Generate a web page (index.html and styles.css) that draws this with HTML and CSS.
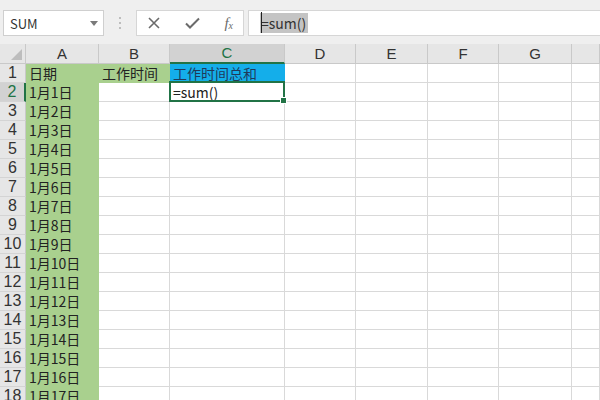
FILE: index.html
```html
<html>
    <head>
        <title>工作时间</title>
        <link rel="stylesheet" href="styles.css">
    </head>
    <body>
        <div class="toolbar">
            <div class="namebox">
                <span>SUM</span>
                <svg class="caret" width="8" height="5" viewBox="0 0 8 5"><path d="M0 0h8L4 5z" fill="#7a7a7a"/></svg>
            </div>
            <div class="dots"><i></i><i></i><i></i></div>
            <div class="btns">
                <svg width="12" height="12" viewBox="0 0 12 12"><path d="M1 1l10 10M11 1L1 11" stroke="#6b6b6b" stroke-width="1.6"/></svg>
                <svg width="15" height="12" viewBox="0 0 15 12"><path d="M1 6.5l4 4L14 1.5" stroke="#6b6b6b" stroke-width="2" fill="none"/></svg>
                <span class="fx">f<sub>x</sub></span>
            </div>
            <div class="formula"><span class="sel"><b class="cursor"></b>=sum()</span></div>
        </div>

        <div class="sheet">
            <div class="hd corner"></div><div class="hd">A</div><div class="hd">B</div><div class="hd on">C</div><div class="hd">D</div><div class="hd">E</div><div class="hd">F</div><div class="hd">G</div><div class="hd"></div>

            <div class="rh">1</div><div class="c g">日期</div><div class="c g">工作时间</div><div class="c b">工作时间总和</div><div class="c"></div><div class="c"></div><div class="c"></div><div class="c"></div><div class="c"></div>
            <div class="rh on">2</div><div class="c g">1月1日</div><div class="c"></div><div class="c act">=sum()</div><div class="c"></div><div class="c"></div><div class="c"></div><div class="c"></div><div class="c"></div>
            <div class="rh">3</div><div class="c g">1月2日</div><div class="c"></div><div class="c"></div><div class="c"></div><div class="c"></div><div class="c"></div><div class="c"></div><div class="c"></div>
            <div class="rh">4</div><div class="c g">1月3日</div><div class="c"></div><div class="c"></div><div class="c"></div><div class="c"></div><div class="c"></div><div class="c"></div><div class="c"></div>
            <div class="rh">5</div><div class="c g">1月4日</div><div class="c"></div><div class="c"></div><div class="c"></div><div class="c"></div><div class="c"></div><div class="c"></div><div class="c"></div>
            <div class="rh">6</div><div class="c g">1月5日</div><div class="c"></div><div class="c"></div><div class="c"></div><div class="c"></div><div class="c"></div><div class="c"></div><div class="c"></div>
            <div class="rh">7</div><div class="c g">1月6日</div><div class="c"></div><div class="c"></div><div class="c"></div><div class="c"></div><div class="c"></div><div class="c"></div><div class="c"></div>
            <div class="rh">8</div><div class="c g">1月7日</div><div class="c"></div><div class="c"></div><div class="c"></div><div class="c"></div><div class="c"></div><div class="c"></div><div class="c"></div>
            <div class="rh">9</div><div class="c g">1月8日</div><div class="c"></div><div class="c"></div><div class="c"></div><div class="c"></div><div class="c"></div><div class="c"></div><div class="c"></div>
            <div class="rh">10</div><div class="c g">1月9日</div><div class="c"></div><div class="c"></div><div class="c"></div><div class="c"></div><div class="c"></div><div class="c"></div><div class="c"></div>
            <div class="rh">11</div><div class="c g">1月10日</div><div class="c"></div><div class="c"></div><div class="c"></div><div class="c"></div><div class="c"></div><div class="c"></div><div class="c"></div>
            <div class="rh">12</div><div class="c g">1月11日</div><div class="c"></div><div class="c"></div><div class="c"></div><div class="c"></div><div class="c"></div><div class="c"></div><div class="c"></div>
            <div class="rh">13</div><div class="c g">1月12日</div><div class="c"></div><div class="c"></div><div class="c"></div><div class="c"></div><div class="c"></div><div class="c"></div><div class="c"></div>
            <div class="rh">14</div><div class="c g">1月13日</div><div class="c"></div><div class="c"></div><div class="c"></div><div class="c"></div><div class="c"></div><div class="c"></div><div class="c"></div>
            <div class="rh">15</div><div class="c g">1月14日</div><div class="c"></div><div class="c"></div><div class="c"></div><div class="c"></div><div class="c"></div><div class="c"></div><div class="c"></div>
            <div class="rh">16</div><div class="c g">1月15日</div><div class="c"></div><div class="c"></div><div class="c"></div><div class="c"></div><div class="c"></div><div class="c"></div><div class="c"></div>
            <div class="rh">17</div><div class="c g">1月16日</div><div class="c"></div><div class="c"></div><div class="c"></div><div class="c"></div><div class="c"></div><div class="c"></div><div class="c"></div>
            <div class="rh">18</div><div class="c g">1月17日</div><div class="c"></div><div class="c"></div><div class="c"></div><div class="c"></div><div class="c"></div><div class="c"></div><div class="c"></div>
        </div>
    </body>
</html>
```
FILE: styles.css
```css
body{
	margin:0;
	width:600px;
	height:400px;
	overflow:hidden;
	background:#fff;
	font-family:'Noto Sans CJK SC', sans-serif;
	}
.toolbar{
	height:44px;
	box-sizing:border-box;
	padding-top:10px;
	background:#efefef;
	display:flex;
	align-items:flex-start;
	}
.namebox{
	margin-left:3px;
	width:101px;
	height:26px;
	box-sizing:border-box;
	background:#fff;
	border:1px solid #cfcfcf;
	display:flex;
	align-items:center;
	justify-content:space-between;
	padding:0 5px 0 6px;
	font-size:13px;
	color:#333;
	}
.dots{
	width:32px;
	height:26px;
	display:flex;
	flex-direction:column;
	align-items:center;
	justify-content:center;
	gap:3px;
	}
.dots i{
	width:2px;
	height:2px;
	background:#bdbdbd;
	}
.btns{
	width:108px;
	height:26px;
	box-sizing:border-box;
	background:#fff;
	border:1px solid #d6d6d6;
	display:flex;
	align-items:center;
	justify-content:space-between;
	padding:0 10px 0 11px;
	}
.fx{
	font-family:'Liberation Serif', serif;
	font-style:italic;
	font-size:15px;
	color:#6b6b6b;
	}
.fx sub{
	font-size:10px;
	vertical-align:-1px;
	}
.formula{
	margin-left:4px;
	flex:1;
	height:26px;
	box-sizing:border-box;
	background:#fff;
	border:1px solid #d6d6d6;
	border-right:0;
	display:flex;
	align-items:center;
	padding-left:11px;
	font-size:14px;
	color:#333;
	}
.sel{
	position:relative;
	background:#c4c4c4;
	padding:1px 2px 1px 1px;
	line-height:18px;
	}
.cursor{
	position:absolute;
	left:1px;
	top:-1px;
	width:1px;
	height:21px;
	background:#222;
	}
.sheet{
	display:grid;
	grid-template-columns:26px 73px 71px 115px 71px 72px 71px 73px 1fr;
	grid-template-rows:20px;
	grid-auto-rows:19px;
	}
.hd{
	background:#e6e6e6;
	border-right:1px solid #c9c9c9;
	border-bottom:1px solid #c9c9c9;
	font-family:'Liberation Sans', sans-serif;
	font-size:15px;
	color:#333;
	display:flex;
	align-items:flex-end;
	justify-content:center;
	line-height:18px;
	}
.hd.on{
	background:#d2d2d2;
	border-bottom:2px solid #217346;
	color:#217346;
	}
.corner{
	position:relative;
	}
.corner::after{
	content:'';
	position:absolute;
	right:3px;
	bottom:3px;
	border-left:11px solid transparent;
	border-bottom:11px solid #bdbdbd;
	}
.rh{
	background:#e6e6e6;
	border-right:1px solid #c9c9c9;
	border-bottom:1px solid #d4d4d4;
	font-family:'Liberation Sans', sans-serif;
	font-size:16px;
	color:#333;
	display:flex;
	align-items:flex-end;
	justify-content:center;
	line-height:18px;
	}
.rh.on{
	background:#d2d2d2;
	border-right:2px solid #217346;
	color:#217346;
	}
.c{
	border-right:1px solid #d9d9d9;
	border-bottom:1px solid #d9d9d9;
	padding-left:3px;
	font-size:14px;
	line-height:18px;
	color:#222;
	white-space:nowrap;
	display:flex;
	align-items:flex-end;
	}
.c.g{
	background:#a9d08e;
	border-color:#a9d08e;
	}
.c.b{
	background:#14aeea;
	border-color:#14aeea;
	color:#1f3a5a;
	}
.c.act{
	position:relative;
	}
.c.act::before{
	content:'';
	position:absolute;
	left:-1px;
	top:-2px;
	right:-1px;
	bottom:-1px;
	border:2px solid #217346;
	}
.c.act::after{
	content:'';
	position:absolute;
	right:-3px;
	bottom:-3px;
	width:5px;
	height:5px;
	background:#217346;
	border:1px solid #fff;
	}
```
